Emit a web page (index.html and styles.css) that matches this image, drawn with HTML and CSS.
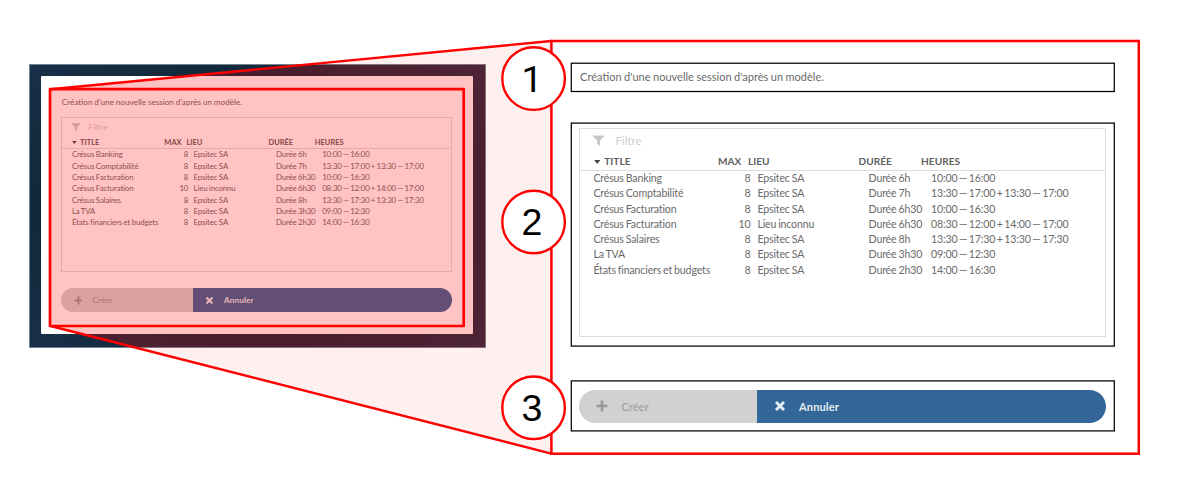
FILE: index.html
```
<!DOCTYPE html>
<html lang="fr">
<head>
<meta charset="utf-8">
<title>Création d'une session</title>
<link rel="stylesheet" href="styles.css">
</head>
<body>
<main class="canvas">
  <svg class="layer" width="1200" height="486" viewBox="0 0 1200 486">
    <polygon points="50.5,89.5 551.5,41 551.5,453.5 50.5,326" class="beam"/>
  </svg>
  <div class="backdrop"><div class="sheet"></div></div>
  <div class="dialog dialog-small" id="small"></div>
  <svg class="layer" width="1200" height="486" viewBox="0 0 1200 486">
    <clipPath id="shot"><rect x="29" y="64.5" width="456.5" height="283"/></clipPath>
    <polygon points="50.5,89.5 551.5,41 551.5,453.5 50.5,326" class="tint" clip-path="url(#shot)"/>
    <rect x="50" y="89.2" width="413.7" height="236.8" class="red focus"/>
    <path d="M50.5 89.2 551.3 41M50.5 326 551.3 453.6" class="red"/>
    <rect x="551.4" y="41" width="587.4" height="412.7" class="page"/>
    <rect x="571.3" y="63.2" width="543" height="28.3" class="frame"/>
    <rect x="571.3" y="123.1" width="543" height="223" class="frame"/>
    <rect x="571.3" y="380.9" width="543" height="50" class="frame"/>
    <g class="marker">
      <circle cx="533.6" cy="78.6" r="31.3"/><text x="532" y="91.5" class="one">1</text>
      <circle cx="533.6" cy="222" r="31.3"/><text x="532" y="234.8">2</text>
      <circle cx="533.6" cy="407.8" r="31.3"/><text x="532" y="420.5">3</text>
    </g>
  </svg>
  <div class="dialog dialog-large" id="large"></div>
</main>
<template id="dialog">
  <p class="intro">Création d'une nouvelle session d'après un modèle.</p>
  <section class="table">
    <div class="filter">
      <svg class="funnel" viewBox="0 0 12 12"><path d="M0 .5h12v1L7.7 6v6L4.5 9.5V6L0 1.5z"/></svg>
      <span>Filtre</span>
    </div>
    <div class="head">
      <span class="h-title"><svg class="caret" viewBox="0 0 6 4"><path d="M0 0h6L3 4z"/></svg>TITLE</span>
      <span class="h-max">MAX</span><span class="h-lieu">LIEU</span><span class="h-duree">DURÉE</span><span>HEURES</span>
    </div>
    <div class="rows"></div>
  </section>
  <div class="actions">
    <div class="btn create"><svg class="icon" viewBox="0 0 12 12"><path d="M6 .5v11M.5 6h11"/></svg>Créer</div>
    <div class="btn cancel"><svg class="icon cross" viewBox="0 0 12 12"><path d="M2 2l8 8M10 2l-8 8"/></svg>Annuler</div>
  </div>
</template>
<script src="app.js"></script>
</body>
</html>
```
FILE: styles.css
```
body { margin: 0; background: #fff; }
.canvas { position: relative; width: 1200px; height: 486px; overflow: hidden; font-family: Lato, sans-serif; }
.layer { position: absolute; left: 0; top: 0; }
.beam { fill: #fff0f0; }
.tint { fill: #f00; fill-opacity: .236; }
.red { fill: none; stroke: #f00; stroke-width: 2.4; }
.focus { stroke-width: 2.7; stroke-linejoin: round; }
.page { fill: #fff; stroke: #f00; stroke-width: 2.5; }
.frame { fill: none; stroke: #000; stroke-width: 1.25; }
.marker circle { fill: #fff; stroke: #f00; stroke-width: 2.4; }
.marker text { font: 37.5px "Liberation Sans", sans-serif; text-anchor: middle; fill: #000; }
.marker .one { font-family: Roboto, sans-serif; }
.backdrop {
  position: absolute; left: 29px; top: 64px; width: 457px; height: 284px;
  box-sizing: border-box; padding: 11px 12px 13px 11px; border: 1px solid #74818d;
  background: radial-gradient(ellipse at center, #0f2436 50%, #142a3e 75%, #18304a 100%);
}
.sheet { height: 100%; background: #fff; border-radius: 1px; }

.dialog { position: absolute; width: calc(527 * var(--u)); color: #6a6a6a; }
.dialog-large { --u: 1px; --gap-table: 36px; --gap-actions: 53px; left: 579px; top: 62px; }
.dialog-small { --u: .7412px; --gap-table: 4px; --gap-actions: 16px; left: 61px; top: 91px; }
.intro { margin: 0 0 var(--gap-table) calc(1.1 * var(--u)); height: calc(30 * var(--u)); line-height: calc(30 * var(--u)); font-size: calc(11 * var(--u)); word-spacing: calc(-.3 * var(--u)); white-space: nowrap; }
.table { box-sizing: border-box; height: calc(208.5 * var(--u)); border: 1px solid #ddd; margin-bottom: var(--gap-actions); font-size: calc(10.6 * var(--u)); white-space: nowrap; }
.filter { display: flex; align-items: center; height: calc(24 * var(--u)); padding-left: calc(13.4 * var(--u)); gap: calc(11 * var(--u)); color: #ccc; font-size: calc(11.3 * var(--u)); letter-spacing: calc(.1 * var(--u)); }
.filter > * { position: relative; top: calc(-.6 * var(--u)); }
.funnel { width: calc(11 * var(--u)); height: calc(11 * var(--u)); fill: #c8c8c8; }
.head { box-sizing: border-box; display: flex; align-items: center; height: calc(18 * var(--u)); padding-left: calc(13.9 * var(--u)); border-bottom: 1px solid #ddd; font-weight: 700; font-size: calc(10.1 * var(--u)); color: #606060; }
.dialog-large .head span { position: relative; top: -.6px; }
.caret { width: calc(6.4 * var(--u)); height: calc(4 * var(--u)); margin-right: calc(4 * var(--u)); position: relative; top: calc(-1.4 * var(--u)); fill: #444; }
.h-title { width: calc(112.5 * var(--u)); }
.h-max { width: calc(35 * var(--u)); text-align: right; margin-right: calc(6.5 * var(--u)); }
.h-lieu { width: calc(110.7 * var(--u)); }
.h-duree { width: calc(62.5 * var(--u)); }
.rows { padding-left: calc(13.4 * var(--u)); letter-spacing: calc(-.16 * var(--u)); word-spacing: calc(-.6 * var(--u)); }
.row { display: flex; height: calc(15.27 * var(--u)); line-height: calc(15.27 * var(--u)); }
.c-title { width: calc(127 * var(--u)); }
.c-max { width: calc(30 * var(--u)); text-align: right; margin-right: calc(7 * var(--u)); }
.c-lieu { width: calc(111.2 * var(--u)); }
.c-duree { width: calc(62.5 * var(--u)); }
.c-heures { word-spacing: calc(-1 * var(--u)); }
.actions { display: flex; height: calc(33.3 * var(--u)); border-radius: calc(17 * var(--u)); overflow: hidden; font-size: calc(11 * var(--u)); letter-spacing: calc(.15 * var(--u)); }
.btn { display: flex; align-items: center; gap: calc(13.5 * var(--u)); padding-left: calc(17 * var(--u)); }
.create { box-sizing: border-box; width: calc(177.5 * var(--u)); background: #d1d1d1; color: #999; }
.cancel { flex: 1; background: #336799; color: #e5ecf3; font-weight: 700; }
.icon { width: calc(12 * var(--u)); height: calc(12 * var(--u)); fill: none; stroke: currentColor; stroke-width: 2.6; }
.cross { stroke-width: 2.9; }
```
FILE: app.js
```
const sessions = [
  ["Crésus Banking", 8, "Epsitec SA", "Durée 6h", "10:00 — 16:00"],
  ["Crésus Comptabilité", 8, "Epsitec SA", "Durée 7h", "13:30 — 17:00 + 13:30 — 17:00"],
  ["Crésus Facturation", 8, "Epsitec SA", "Durée 6h30", "10:00 — 16:30"],
  ["Crésus Facturation", 10, "Lieu inconnu", "Durée 6h30", "08:30 — 12:00 + 14:00 — 17:00"],
  ["Crésus Salaires", 8, "Epsitec SA", "Durée 8h", "13:30 — 17:30 + 13:30 — 17:30"],
  ["La TVA", 8, "Epsitec SA", "Durée 3h30", "09:00 — 12:30"],
  ["États financiers et budgets", 8, "Epsitec SA", "Durée 2h30", "14:00 — 16:30"]
];
const columns = ["title", "max", "lieu", "duree", "heures"];
for (const id of ["small", "large"]) {
  const content = document.getElementById("dialog").content.cloneNode(true);
  const rows = content.querySelector(".rows");
  for (const session of sessions) {
    const row = document.createElement("div");
    row.className = "row";
    session.forEach((value, i) => {
      const cell = document.createElement("span");
      cell.className = "c-" + columns[i];
      cell.textContent = value;
      row.append(cell);
    });
    rows.append(row);
  }
  document.getElementById(id).append(content);
}
```
